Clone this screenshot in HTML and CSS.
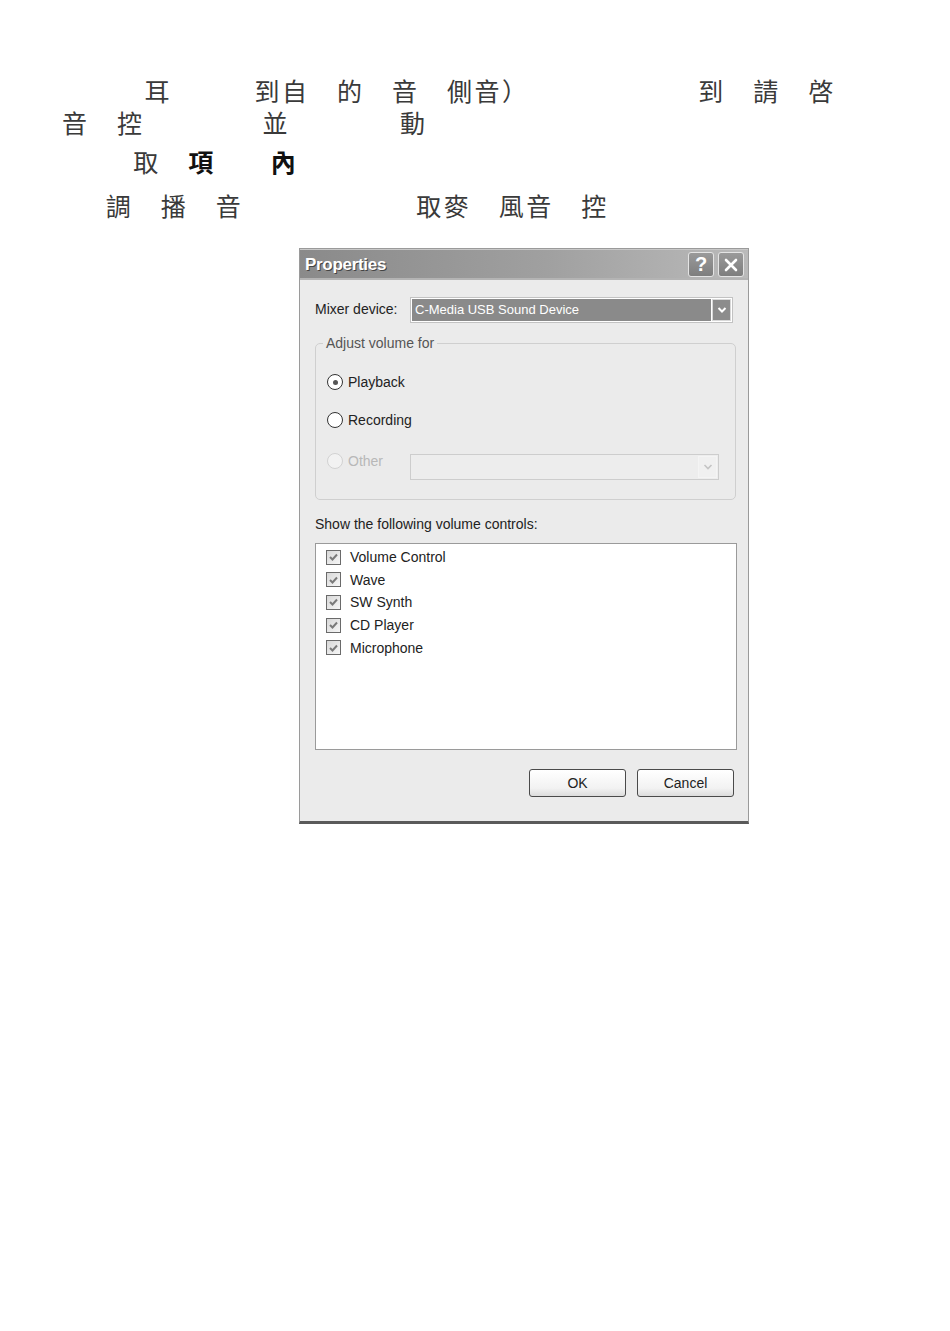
FILE: index.html
```html
<!DOCTYPE html>
<html lang="zh-Hant">
<head>
    <meta charset="UTF-8">
    <title>Properties</title>
    <link rel="stylesheet" href="styles.css">
</head>
<body>
    <div class="page">
        <p class="text">　　　耳　　　到自　的　音　側音）　　　　　　  到　請　啓</p>
        <p class="text">音　控　　　　 並　　　　動</p>
        <p class="text step">　　  取　<b>項</b>　　<b>內</b></p>
        <p class="text step-last">　  調　播　音　　　　　　 取麥　風音　控</p>

        <div class="dialog">
            <div class="titlebar">
                <span class="title">Properties</span>
                <span class="tbtn help">?</span>
                <span class="tbtn close">
                    <svg width="16" height="16" viewBox="0 0 16 16"><path d="M3 3L13 13M13 3L3 13" stroke="#fff" stroke-width="2.6" stroke-linecap="round"/></svg>
                </span>
            </div>
            <div class="dialog-body">
                <div class="mixer">
                    <span class="mixer-label">Mixer device:</span>
                    <div class="combo">
                        <span class="combo-value">C-Media USB Sound Device</span>
                        <span class="combo-arrow">
                            <svg width="10" height="8" viewBox="0 0 10 8"><path d="M1.5 2L5 5.5L8.5 2" fill="none" stroke="#fff" stroke-width="2"/></svg>
                        </span>
                    </div>
                </div>

                <fieldset class="group">
                    <legend>Adjust volume for</legend>
                    <div class="opt">
                        <span class="radio checked"></span>Playback
                    </div>
                    <div class="opt">
                        <span class="radio"></span>Recording
                    </div>
                    <div class="opt other">
                        <span class="opt-label"><span class="radio"></span>Other</span>
                        <div class="combo disabled">
                            <span class="combo-value"></span>
                            <span class="combo-arrow">
                                <svg width="10" height="8" viewBox="0 0 10 8"><path d="M1.5 2L5 5.5L8.5 2" fill="none" stroke="#c4c4c4" stroke-width="1.6"/></svg>
                            </span>
                        </div>
                    </div>
                </fieldset>

                <div class="list-label">Show the following volume controls:</div>
                <div class="list">
                    <div class="item"><span class="check"><svg width="9" height="8" viewBox="0 0 9 8"><path d="M1 4L3.5 6.5L8 1.5" fill="none" stroke="#7a7a7a" stroke-width="2"/></svg></span>Volume Control</div>
                    <div class="item"><span class="check"><svg width="9" height="8" viewBox="0 0 9 8"><path d="M1 4L3.5 6.5L8 1.5" fill="none" stroke="#7a7a7a" stroke-width="2"/></svg></span>Wave</div>
                    <div class="item"><span class="check"><svg width="9" height="8" viewBox="0 0 9 8"><path d="M1 4L3.5 6.5L8 1.5" fill="none" stroke="#7a7a7a" stroke-width="2"/></svg></span>SW Synth</div>
                    <div class="item"><span class="check"><svg width="9" height="8" viewBox="0 0 9 8"><path d="M1 4L3.5 6.5L8 1.5" fill="none" stroke="#7a7a7a" stroke-width="2"/></svg></span>CD Player</div>
                    <div class="item"><span class="check"><svg width="9" height="8" viewBox="0 0 9 8"><path d="M1 4L3.5 6.5L8 1.5" fill="none" stroke="#7a7a7a" stroke-width="2"/></svg></span>Microphone</div>
                </div>

                <div class="buttons">
                    <button class="btn">OK</button>
                    <button class="btn">Cancel</button>
                </div>
            </div>
        </div>
    </div>
</body>
</html>
```

FILE: styles.css
```css
body {
    margin: 0;
    background-color: #ffffff;
    color: #222222;
}
.page {
    padding: 74px 0 0 62px;
}
.text {
    margin: 0;
    font-family: "Noto Sans CJK TC", sans-serif;
    font-size: 25px;
    letter-spacing: 2.5px;
    line-height: 32px;
    white-space: pre;
    color: #3a3a3a;
}
.text b {
    color: #111111;
}
.step {
    margin-top: 7px;
}
.step-last {
    margin-top: 12px;
}

/* dialog */
.dialog {
    width: 450px;
    margin: 27px 0 0 237px;
    box-sizing: border-box;
    background: #ebebeb;
    border: 1px solid #9a9a9a;
    border-bottom: 3px solid #5a5a5a;
    font-family: "Liberation Sans", Arial, sans-serif;
    font-size: 14px;
    color: #222222;
}
.titlebar {
    height: 31px;
    display: flex;
    align-items: center;
    padding: 0 4px 0 5px;
    background: linear-gradient(to right, #8a8a8a, #a0a0a0 55%, #bababa);
    box-shadow: inset 0 1px 0 #c8c8c8, inset 0 -2px 0 #b4b4b4;
}
.title {
    flex: 1;
    font-size: 17px;
    font-weight: bold;
    color: #ffffff;
    text-shadow: 1px 1px 0 #444444;
    letter-spacing: -0.3px;
}
.tbtn {
    width: 24px;
    height: 23px;
    margin-left: 4px;
    display: flex;
    align-items: center;
    justify-content: center;
    background: linear-gradient(#9a9a9a, #7e7e7e);
    border: 1px solid #e4e4e4;
    border-radius: 3px;
    color: #ffffff;
    font-size: 20px;
    font-weight: bold;
}
.dialog-body {
    padding: 17px 11px 24px 15px;
}
.mixer {
    display: flex;
    align-items: center;
}
.mixer-label {
    width: 95px;
    margin-top: -3px;
}
.combo {
    display: flex;
    box-sizing: border-box;
    height: 26px;
    width: 323px;
    border: 1px solid #c2c2c2;
    background: #ffffff;
    padding: 1px;
}
.combo-value {
    flex: 1;
    background: #8a8a8a;
    color: #ffffff;
    font-size: 13px;
    line-height: 22px;
    padding-left: 3px;
}
.combo-arrow {
    width: 19px;
    margin-left: 1px;
    display: flex;
    align-items: center;
    justify-content: center;
    background: #8c8c8c;
    border: 1px solid #d8d8d8;
    box-sizing: border-box;
}
.combo.disabled {
    width: 309px;
    height: 26px;
    margin-top: 3px;
    border-color: #cdcdcd;
    background: #ededed;
}
.combo.disabled .combo-value {
    background: transparent;
}
.combo.disabled .combo-arrow {
    background: #f0f0f0;
    border-color: #f4f4f4;
}

/* group box */
.group {
    margin: 12px 0 0 0;
    width: 421px;
    box-sizing: border-box;
    border: 1px solid #cfcfcf;
    border-radius: 5px;
    padding: 21px 0 19px 7px;
}
.group legend {
    padding: 0 3px;
    line-height: 16px;
    color: #555555;
}
.opt {
    display: flex;
    align-items: center;
    height: 20px;
    margin-left: 4px;
    margin-bottom: 18px;
}
.opt.other {
    align-items: flex-start;
    height: auto;
    margin-top: 21px;
    margin-bottom: 0;
    color: #b8b8b8;
}
.opt-label {
    display: flex;
    align-items: center;
    height: 20px;
    width: 83px;
}
.radio {
    width: 14px;
    height: 14px;
    margin-right: 5px;
    border: 1px solid #333333;
    border-radius: 50%;
    background: #ffffff;
    display: flex;
    align-items: center;
    justify-content: center;
}
.radio.checked::after {
    content: "";
    width: 5px;
    height: 5px;
    border-radius: 50%;
    background: #555555;
}
.other .radio {
    border-color: #d2d2d2;
    background: #f2f2f2;
}

/* list */
.list-label {
    margin-top: 16px;
    line-height: 16px;
}
.list {
    margin-top: 11px;
    width: 422px;
    height: 207px;
    box-sizing: border-box;
    border: 1px solid #9a9a9a;
    background: #ffffff;
    padding: 2px 0 0 10px;
}
.item {
    display: flex;
    align-items: center;
    height: 22.6px;
}
.check {
    width: 13px;
    height: 13px;
    margin-right: 9px;
    border: 1px solid #6a6a6a;
    background: linear-gradient(135deg, #d8d8d8, #f6f6f6);
    display: flex;
    align-items: center;
    justify-content: center;
}

/* buttons */
.buttons {
    display: flex;
    justify-content: flex-end;
    gap: 11px;
    margin: 19px 3px 0 0;
}
.btn {
    width: 97px;
    height: 28px;
    border: 1px solid #4a4a4a;
    border-radius: 3px;
    background: linear-gradient(#ffffff, #f2f2f2 70%, #dcdcdc);
    font-family: "Liberation Sans", Arial, sans-serif;
    font-size: 14px;
    color: #222222;
}
```
